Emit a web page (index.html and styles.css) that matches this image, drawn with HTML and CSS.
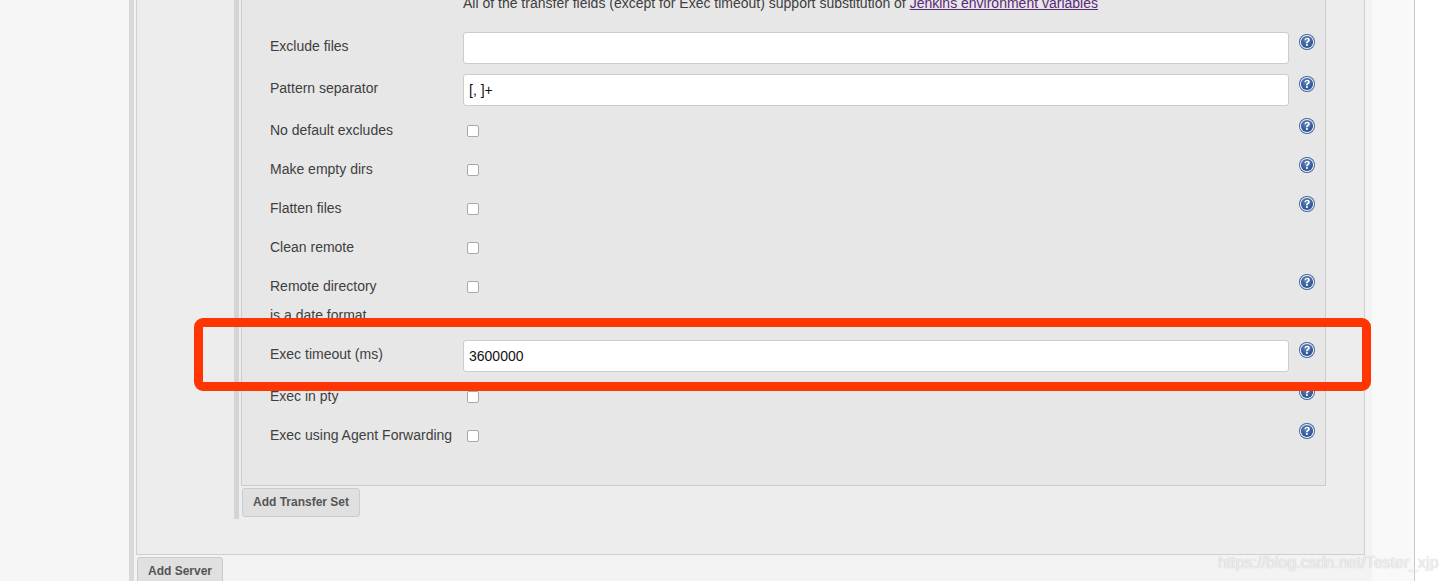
FILE: index.html
```html
<!DOCTYPE html>
<html lang="en">
<head>
<meta charset="utf-8">
<title>Publish over SSH</title>
<link rel="stylesheet" href="styles.css">
</head>
<body>
<svg class="sprites" width="0" height="0" aria-hidden="true">
  <defs>
    <radialGradient id="helpfill" cx="45%" cy="35%" r="70%">
      <stop offset="0" stop-color="#5f84bd"/>
      <stop offset="1" stop-color="#274a8c"/>
    </radialGradient>
    <symbol id="help" viewBox="0 0 16 16">
      <circle cx="8" cy="8" r="8" fill="#3f659f"/>
      <circle cx="8" cy="8" r="7.1" fill="#f0f4fa"/>
      <circle cx="8" cy="8" r="6.1" fill="url(#helpfill)"/>
      <path d="M5.4 6.2C5.5 4.6 6.7 3.7 8.1 3.7c1.6 0 2.7.9 2.7 2.2 0 1.1-.7 1.7-1.3 2.1-.6.4-.8.7-.8 1.3H7c0-1.1.3-1.6 1-2.1.5-.4.9-.7.9-1.2 0-.6-.4-.9-.9-.9-.6 0-1.1.4-1.1 1.1z" fill="#fff"/>
      <rect x="7" y="10.1" width="1.8" height="1.8" fill="#fff"/>
    </symbol>
  </defs>
</svg>
<div class="page">
  <aside class="sidebar"></aside>
  <main class="main">
    <div class="server-list">
      <section class="server">
        <div class="transfer-wrap">
          <div class="transfer">
            <p class="note">All of the transfer fields (except for Exec timeout) support substitution of <a href="#">Jenkins environment variables</a></p>

            <div class="row row-text">
              <label class="label">Exclude files</label>
              <input class="text" type="text">
              <svg class="help"><use href="#help"/></svg>
            </div>
            <div class="row row-text">
              <label class="label">Pattern separator</label>
              <input class="text" type="text" value="[, ]+">
              <svg class="help"><use href="#help"/></svg>
            </div>
            <div class="row row-check">
              <label class="label">No default excludes</label>
              <input class="check" type="checkbox">
              <svg class="help"><use href="#help"/></svg>
            </div>
            <div class="row row-check">
              <label class="label">Make empty dirs</label>
              <input class="check" type="checkbox">
              <svg class="help"><use href="#help"/></svg>
            </div>
            <div class="row row-check">
              <label class="label">Flatten files</label>
              <input class="check" type="checkbox">
              <svg class="help"><use href="#help"/></svg>
            </div>
            <div class="row row-check">
              <label class="label">Clean remote</label>
              <input class="check" type="checkbox">
            </div>
            <div class="row row-tight">
              <label class="label">Remote directory</label>
              <input class="check" type="checkbox">
              <svg class="help"><use href="#help"/></svg>
            </div>
            <div class="row row-check">
              <label class="label">is a date format</label>
            </div>
            <div class="row row-text">
              <label class="label">Exec timeout (ms)</label>
              <input class="text" type="text" value="3600000">
              <svg class="help"><use href="#help"/></svg>
            </div>
            <div class="row row-check">
              <label class="label">Exec in pty</label>
              <input class="check" type="checkbox">
              <svg class="help"><use href="#help"/></svg>
            </div>
            <div class="row row-last">
              <label class="label">Exec using Agent Forwarding</label>
              <input class="check" type="checkbox">
              <svg class="help"><use href="#help"/></svg>
            </div>
          </div>
          <button class="btn btn-transfer" type="button">Add Transfer Set</button>
        </div>
      </section>
      <button class="btn btn-server" type="button">Add Server</button>
    </div>
  </main>
</div>
<div class="highlight"></div>
<div class="watermark">https://blog.csdn.net/Tester_xjp</div>
</body>
</html>
```
FILE: styles.css
```css
* { box-sizing: border-box; }

html, body {
  margin: 0;
  height: 581px;
  overflow: hidden;
  background: #fff;
  font-family: "Liberation Sans", Arial, sans-serif;
  font-size: 14px;
  color: #404040;
}

.sprites { position: absolute; }

.page {
  display: flex;
  width: 1415px;
  height: 581px;
}

.sidebar {
  width: 129px;
  flex: none;
  background: #f6f6f6;
}

.main {
  width: 1286px;
  flex: none;
  background: #f9f9f9;
  border-right: 1px solid #c8c8c8;
}

.server-list {
  width: 1243px;
  height: 581px;
  overflow: hidden;
  background: #f3f3f3;
  border-left: 5px solid #d9d9d9;
  padding-left: 2px;
}

.server {
  width: 1229px;
  height: 555px;
  background: #ededed;
  border: 1px solid #d0d0d0;
  border-top: 0;
  padding-left: 97px;
}

.transfer-wrap {
  width: 1092px;
  height: 519px;
  border-left: 5px solid #d4d4d4;
  padding-left: 2px;
}

.transfer {
  display: flow-root;
  width: 1085px;
  height: 486px;
  background: #e7e7e7;
  border: 1px solid #ccc;
  border-top: 0;
  padding-left: 28px;
}

.note {
  margin: -5px 0 21px 193px;
  line-height: 16px;
  white-space: nowrap;
}

.note a { color: #5b2a78; }

.row {
  display: grid;
  grid-template-columns: 193px 826px 26px;
  align-items: start;
}

.row-text { height: 42px; }
.row-check { height: 39px; }
.row-tight { height: 29px; }
.row-last { height: 28px; }

.label {
  grid-column: 1;
  line-height: 28px;
  white-space: nowrap;
}

.text {
  grid-column: 2;
  width: 826px;
  height: 32px;
  padding: 0 5px;
  background: #fff;
  border: 1px solid #ccc;
  border-radius: 3px;
  font: 14px "Liberation Sans", Arial, sans-serif;
  color: #111;
  outline: 0;
}

.check {
  grid-column: 2;
  appearance: none;
  width: 12px;
  height: 12px;
  margin: 9px 0 0 4px;
  background: #fff;
  border: 1px solid #a9a9a9;
  border-radius: 2px;
}

.help {
  grid-column: 3;
  width: 16px;
  height: 16px;
  margin: 2px 0 0 10px;
}

.btn {
  display: block;
  height: 29px;
  padding: 0 0 2px;
  background: #e0e0e0;
  border: 1px solid #ccc;
  border-radius: 3px;
  font: bold 12px "Liberation Sans", Arial, sans-serif;
  color: #555;
  white-space: nowrap;
}

.btn-transfer {
  width: 118px;
  margin: 2px 0 0 1px;
}

.btn-server {
  width: 86px;
  margin: 2px 0 0 1px;
}

.highlight {
  position: absolute;
  left: 194px;
  top: 318px;
  width: 1177px;
  height: 73px;
  border: 9px solid #ff3503;
  border-radius: 9px;
}

.watermark {
  position: absolute;
  left: 1218px;
  top: 553px;
  font-size: 16px;
  line-height: 20px;
  color: rgba(255, 255, 255, .75);
  text-shadow: 0 0 1px rgba(120, 120, 120, .55);
  white-space: nowrap;
}
```
